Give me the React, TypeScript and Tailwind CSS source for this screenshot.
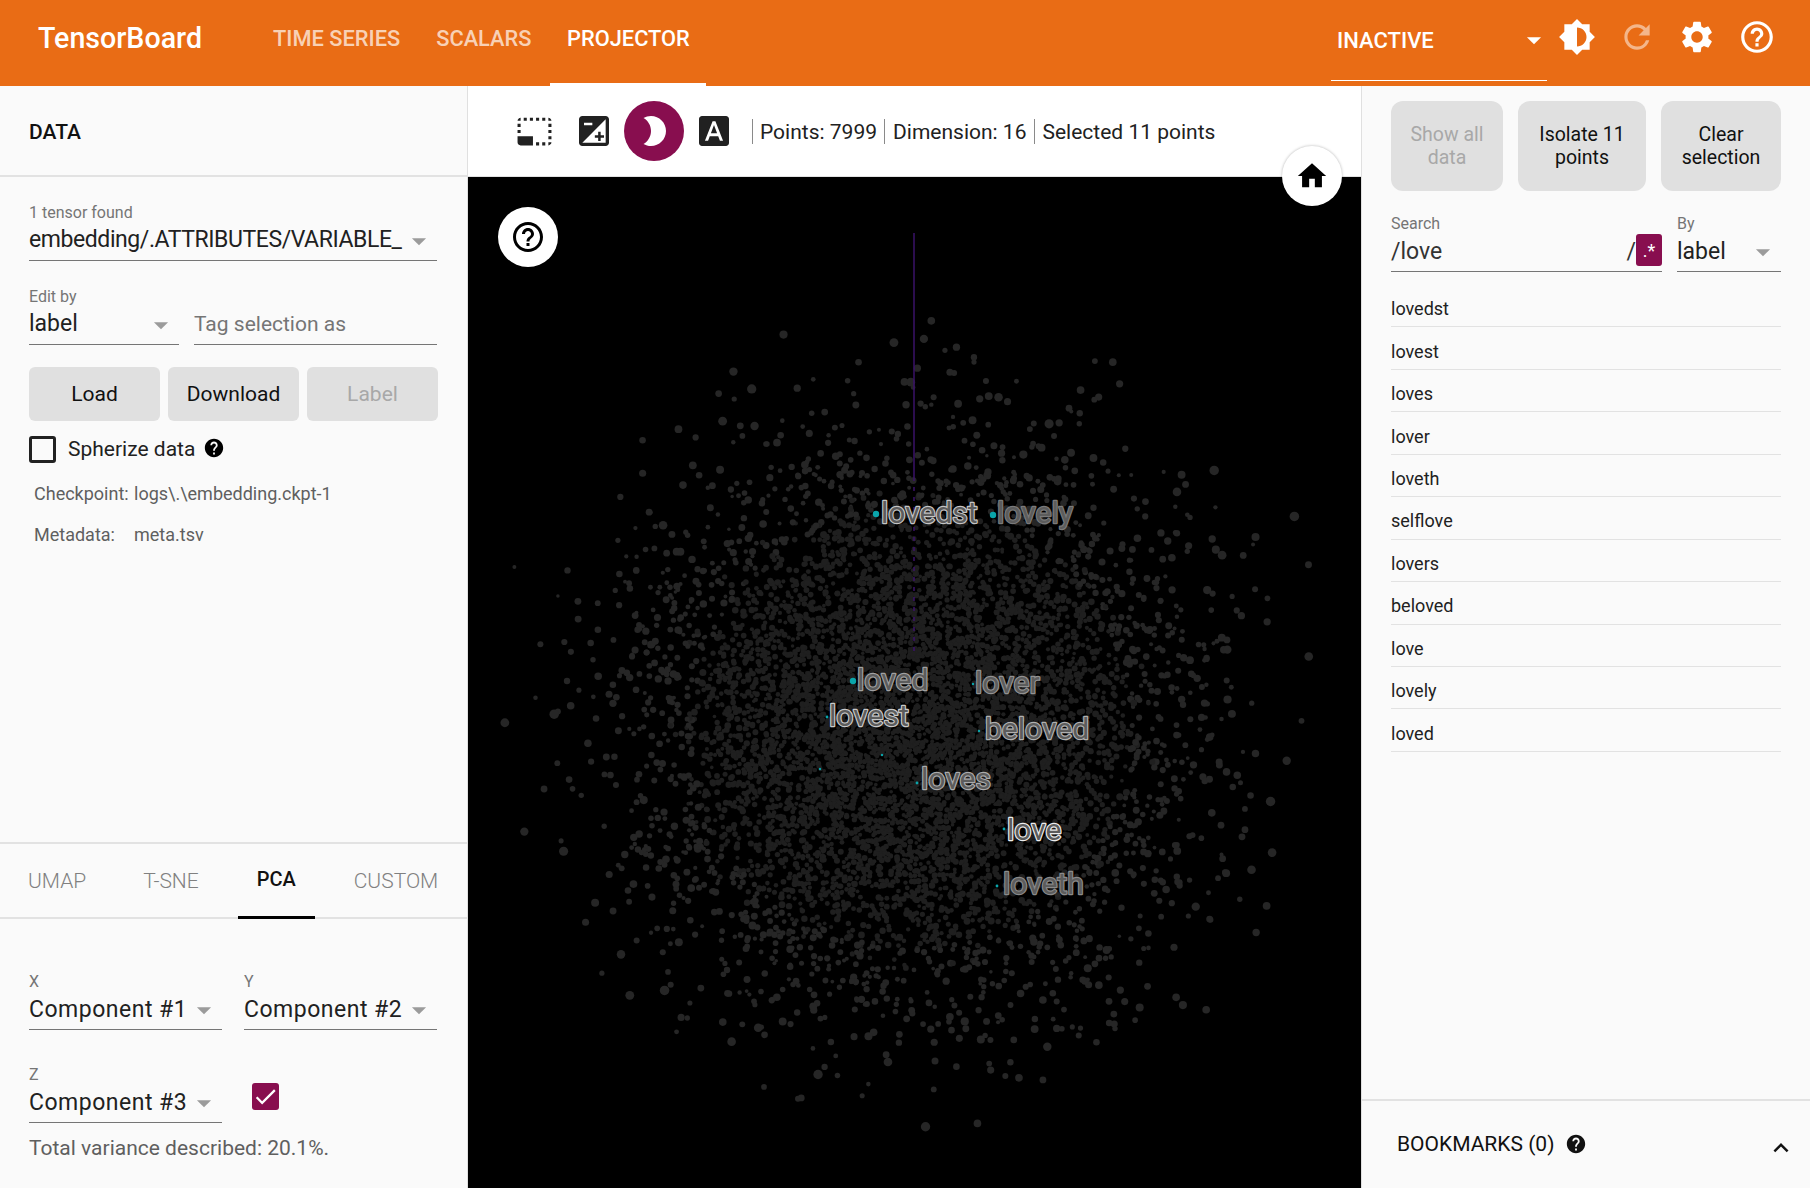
import { useMemo } from "react";
import {
  MdArrowDropDown,
  MdBrightness2,
  MdBrightness6,
  MdCheck,
  MdExposure,
  MdFontDownload,
  MdHelp,
  MdHelpOutline,
  MdHome,
  MdKeyboardArrowUp,
  MdPhotoSizeSelectSmall,
  MdRefresh,
  MdSettings,
} from "react-icons/md";

const results = [
  "lovedst",
  "lovest",
  "loves",
  "lover",
  "loveth",
  "selflove",
  "lovers",
  "beloved",
  "love",
  "lovely",
  "loved",
];

const labels = [
  { text: "lovedst", x: 881, y: 523, color: "#c4c4c4" },
  { text: "lovely", x: 997, y: 523, color: "#7a7a7a" },
  { text: "loved", x: 857, y: 690, color: "#a0a0a0" },
  { text: "lover", x: 975, y: 693, color: "#929292" },
  { text: "lovest", x: 829, y: 726, color: "#c8c8c8" },
  { text: "beloved", x: 985, y: 739, color: "#b0b0b0" },
  { text: "loves", x: 921, y: 789, color: "#aaaaaa" },
  { text: "love", x: 1007, y: 840, color: "#ececec" },
  { text: "loveth", x: 1003, y: 894, color: "#8a8a8a" },
];

const marks = [
  [876, 514, 3.2],
  [993, 515, 3.2],
  [853, 681, 3.2],
  [827, 717, 1.4],
  [917, 783, 1.4],
  [1004, 829, 1.4],
  [997, 886, 1.4],
  [973, 684, 1.2],
  [979, 731, 1.2],
  [882, 755, 1.2],
  [820, 769, 1.2],
];

function makePoints() {
  let seed = 48271;
  const rand = () => {
    seed = (seed * 16807) % 2147483647;
    return seed / 2147483647;
  };
  const out: { x: number; y: number; r: number; fill: string }[] = [];
  for (let i = 0; i < 7999; i++) {
    const a = rand() * Math.PI * 2;
    const d = Math.sqrt(-2 * Math.log(1 - rand() * 0.995));
    const spread = i % 5 === 0 ? 135 : 122;
    const x = 912 + Math.cos(a) * d * spread;
    const y = 728 + Math.sin(a) * d * spread;
    const far = Math.min(d / 3, 1);
    out.push({
      x: x - 468,
      y: y - 177,
      r: 1.7 + rand() * 1.2 + far * far * rand() * 2.2,
      fill: far > 0.6 ? "#262626" : "#1f1f1f",
    });
  }
  return out;
}

function Scatter() {
  const points = useMemo(makePoints, []);
  return (
    <svg className="absolute inset-0 h-full w-full" viewBox="0 0 893 1011">
      {points.map((p, i) => (
        <circle key={i} cx={p.x} cy={p.y} r={p.r} fill={p.fill} />
      ))}
      <line x1="446" y1="56" x2="446" y2="300" stroke="#3a1268" strokeWidth="1.5" />
      <line x1="446" y1="300" x2="446" y2="480" stroke="#3a1268" strokeWidth="1.5" strokeDasharray="4 6" />
      {marks.map(([x, y, r], i) => (
        <circle key={i} cx={x - 468} cy={y - 177} r={r} fill="#0aa5ab" />
      ))}
      {labels.map((l) => (
        <text
          key={l.text}
          x={l.x - 468}
          y={l.y - 177}
          fontSize="30"
          fontFamily="Roboto, sans-serif"
          fill="#5c5c5c"
          stroke={l.color}
          strokeWidth="2.4"
          paintOrder="stroke"
          strokeLinejoin="round"
        >
          {l.text}
        </text>
      ))}
    </svg>
  );
}

function Field({
  label,
  value,
  className,
  valueClass = "",
}: {
  label: string;
  value: string;
  className: string;
  valueClass?: string;
}) {
  return (
    <div className={className}>
      <div className="h-[17px] text-[16px] leading-[17px] text-[#757575]">{label}</div>
      <div className="flex h-[40px] items-center justify-between border-b-[1.5px] border-[#757575] text-[23px] text-[#212121]">
        <span className={`whitespace-nowrap ${valueClass}`}>{value}</span>
        <MdArrowDropDown className="mr-[1px] shrink-0 text-[#9b9b9b]" size={34} />
      </div>
    </div>
  );
}

function GreyButton({
  children,
  disabled,
  className,
}: {
  children: React.ReactNode;
  disabled?: boolean;
  className: string;
}) {
  return (
    <div
      className={`flex items-center justify-center bg-[#e0e0e0] text-center leading-[23px] ${
        disabled ? "text-[#a8a8a8]" : "text-[#111111]"
      } ${className}`}
    >
      {children}
    </div>
  );
}

function LeftPanel() {
  const wide = "relative top-[1px] tracking-[0.5px]";
  return (
    <aside className="flex w-[468px] shrink-0 flex-col border-r border-[#e0e0e0] bg-[#fafafa]">
      <div className="flex h-[91px] shrink-0 items-center border-b-2 border-[#e2e2e2] pl-[29px] pt-[4px] text-[21px] font-medium text-[#111111]">
        DATA
      </div>
      <div className="flex flex-1 flex-col px-[29px] pt-[27px]">
        <Field
          label="1 tensor found"
          value="embedding/.ATTRIBUTES/VARIABLE_"
          className="w-[408px]"
          valueClass="tracking-[-0.42px]"
        />
        <div className="mt-[27px] flex gap-[15px]">
          <Field label="Edit by" value="label" className="w-[150px]" />
          <div className="flex h-[57px] w-[243px] items-end border-b-[1.5px] border-[#757575] pb-[4px] text-[21px] text-[#757575]">
            Tag selection as
          </div>
        </div>
        <div className="mt-[22px] flex gap-[8px] text-[21px]">
          <GreyButton className="h-[54px] w-[131px] rounded-[6px] pt-[1px]">Load</GreyButton>
          <GreyButton className="h-[54px] w-[131px] rounded-[6px] pt-[1px]">Download</GreyButton>
          <GreyButton disabled className="h-[54px] w-[131px] rounded-[6px] pt-[1px]">
            Label
          </GreyButton>
        </div>
        <div className="mt-[13px] flex items-center">
          <span className="h-[27px] w-[27px] rounded-[3px] border-[3px] border-[#212121]" />
          <span className="ml-[12px] text-[21px] text-[#212121]">Spherize data</span>
          <MdHelp className="mb-[4px] ml-[8px]" size={22} />
        </div>
        <div className="mt-[14px] flex pl-[5px] text-[18px] text-[#5f5f5f]">
          <span className="w-[100px]">Checkpoint:</span>
          <span>logs\.\embedding.ckpt-1</span>
        </div>
        <div className="mt-[14px] flex pl-[5px] text-[18px] text-[#5f5f5f]">
          <span className="w-[100px]">Metadata:</span>
          <span>meta.tsv</span>
        </div>
      </div>
      <div className="flex h-[77px] shrink-0 border-y-2 border-[#e2e2e2] text-[21px] font-light text-[#808080]">
        <span className="ml-[28px] mt-[22px]">UMAP</span>
        <span className="ml-[57px] mt-[22px]">T-SNE</span>
        <span className="relative ml-[39px] w-[77px] pt-[20px] text-center text-[20px] font-medium text-[#111111]">
          PCA
          <span className="absolute -bottom-[2px] left-0 h-[3px] w-full bg-black" />
        </span>
        <span className="ml-[39px] mt-[22px]">CUSTOM</span>
      </div>
      <div className="h-[269px] shrink-0 px-[29px] pt-[54px]">
        <div className="flex gap-[22px]">
          <Field label="X" value="Component #1" className="w-[193px]" valueClass={wide} />
          <Field label="Y" value="Component #2" className="w-[193px]" valueClass={wide} />
        </div>
        <div className="mt-[36px] flex">
          <Field label="Z" value="Component #3" className="w-[193px]" valueClass={wide} />
          <span className="ml-[30px] mt-[17px] flex h-[27px] w-[27px] items-center justify-center rounded-[3px] bg-[#880e4f]">
            <MdCheck className="text-white" size={27} />
          </span>
        </div>
        <div className="mt-[10px] text-[21px] text-[#5f5f5f]">Total variance described: 20.1%.</div>
      </div>
    </aside>
  );
}

function RightPanel() {
  return (
    <aside className="flex w-[449px] shrink-0 flex-col border-l border-[#e0e0e0] bg-[#fafafa]">
      <div className="flex-1 pl-[29px] pr-[29px] pt-[15px]">
        <div className="flex gap-[15px] text-[19.5px]">
          <GreyButton disabled className="h-[90px] w-[112px] rounded-[12px]">
            <span>
              Show all
              <br />
              data
            </span>
          </GreyButton>
          <GreyButton className="h-[90px] w-[128px] rounded-[12px]">
            <span>
              Isolate 11
              <br />
              points
            </span>
          </GreyButton>
          <GreyButton className="h-[90px] w-[120px] rounded-[12px]">
            <span>
              Clear
              <br />
              selection
            </span>
          </GreyButton>
        </div>
        <div className="mt-[24px] flex gap-[15px]">
          <div className="w-[271px]">
            <div className="h-[17px] text-[16px] leading-[17px] text-[#757575]">Search</div>
            <div className="relative flex h-[40px] items-center justify-between border-b-[1.5px] border-[#757575] pt-[2px] text-[23px] text-[#333333]">
              <span>/love</span>
              <span className="pr-[26px]">/</span>
              <span className="absolute bottom-[5px] right-0 flex h-[32px] w-[26px] items-center justify-center rounded-[3px] bg-[#880e4f] text-[18px] text-white">
                .*
              </span>
            </div>
          </div>
          <Field label="By" value="label" className="w-[104px]" valueClass="relative top-[1px]" />
        </div>
        <div className="mt-[13px]">
          {results.map((r) => (
            <div
              key={r}
              className="flex h-[42.45px] items-center border-b border-[#e2e2e2] pt-[6px] text-[18px] text-[#212121]"
            >
              {r}
            </div>
          ))}
        </div>
      </div>
      <div className="flex h-[89px] shrink-0 items-center border-t-2 border-[#e2e2e2] pl-[35px] pr-[14px] pt-[1px] text-[21px] text-[#111111]">
        <span>BOOKMARKS (0)</span>
        <MdHelp className="mb-[2px] ml-[11px]" size={22} />
        <MdKeyboardArrowUp className="ml-auto mt-[6px]" size={30} />
      </div>
    </aside>
  );
}

function Toolbar() {
  const slot = "flex h-[60px] w-[60px] items-center justify-center";
  return (
    <div className="flex h-[91px] shrink-0 items-center border-b border-[#e2e2e2] bg-white pl-[36px] text-[21px] text-[#212121]">
      <span className={slot}>
        <MdPhotoSizeSelectSmall size={37} />
      </span>
      <span className={slot}>
        <MdExposure size={40} />
      </span>
      <span className={`${slot} rounded-full bg-[#880e4f]`}>
        <MdBrightness2 className="text-white" size={36} />
      </span>
      <span className={slot}>
        <MdFontDownload size={36} />
      </span>
      <span className="ml-[8px] h-[25px] w-px bg-[#8a8a8a]" />
      <span className="ml-[7px] mt-[3px]">Points: 7999</span>
      <span className="ml-[7px] h-[25px] w-px bg-[#8a8a8a]" />
      <span className="ml-[8px] mt-[3px]">Dimension: 16</span>
      <span className="ml-[8px] h-[25px] w-px bg-[#8a8a8a]" />
      <span className="ml-[7px] mt-[3px]">Selected 11 points</span>
    </div>
  );
}

export default function App() {
  return (
    <div className="flex h-[1188px] w-[1810px] flex-col overflow-hidden bg-white font-['Roboto',sans-serif]">
      <header className="flex h-[86px] shrink-0 bg-[#e96c15] text-white">
        <div className="ml-[38px] mt-[20px] text-[28.6px] font-medium leading-[37px]">TensorBoard</div>
        <nav className="ml-[71px] flex text-[21.8px] font-medium">
          <span className="mt-[23px] text-white/70">TIME SERIES</span>
          <span className="ml-[36px] mt-[23px] text-white/70">SCALARS</span>
          <span className="relative ml-[19px] w-[156px] pt-[23px] text-center">
            PROJECTOR
            <span className="absolute bottom-0 left-0 h-[3px] w-full bg-white" />
          </span>
        </nav>
        <div className="ml-auto flex">
          <div className="mt-[16px] flex h-[65px] w-[216px] items-center justify-between border-b border-white pb-[16px] pl-[6px] text-[22px] font-medium">
            INACTIVE
            <MdArrowDropDown className="-mr-[4px]" size={34} />
          </div>
          <MdBrightness6 className="ml-[11px] mt-[18px]" size={38} />
          <MdRefresh className="ml-[22px] mt-[18px] text-white/50" size={38} />
          <MdSettings className="ml-[22px] mt-[18px]" size={38} />
          <MdHelpOutline className="ml-[22px] mr-[34px] mt-[18px]" size={38} />
        </div>
      </header>
      <main className="flex min-h-0 flex-1">
        <LeftPanel />
        <section className="flex min-w-0 flex-1 flex-col">
          <Toolbar />
          <div className="relative flex-1 bg-black">
            <Scatter />
            <span className="absolute left-[30px] top-[30px] flex h-[60px] w-[60px] items-center justify-center rounded-full bg-white">
              <MdHelpOutline size={36} />
            </span>
            <span className="absolute -top-[31px] right-[19px] flex h-[60px] w-[60px] items-center justify-center rounded-full bg-white shadow-[0_0_3px_rgba(0,0,0,0.3)]">
              <MdHome size={34} />
            </span>
          </div>
        </section>
        <RightPanel />
      </main>
    </div>
  );
}
